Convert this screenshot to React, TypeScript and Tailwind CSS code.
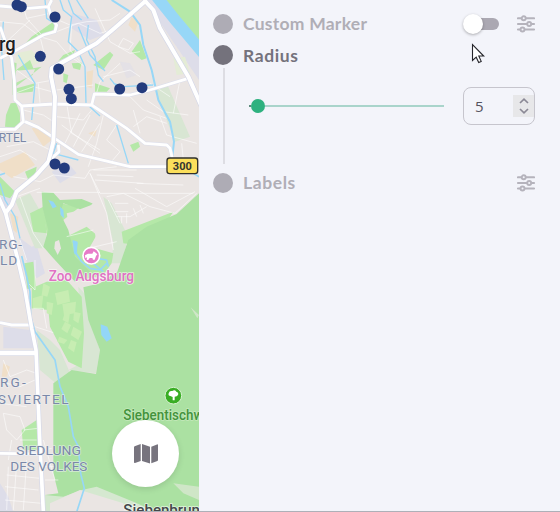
import React from "react";

const minorRoads = [
  "M0 65L70 72L120 110L135 170M65 0L80 55L130 110M80 55L150 40M20 125L90 60M120 110L170 125L205 165L255 200M170 95L235 70L300 100L350 85",
  "M175 60L210 75L260 65L330 60L360 40M215 75L210 150L240 185M285 25L305 70L330 125M330 125L390 160L420 155M370 115L400 130L385 150L355 140Z",
  "M50 210L105 250L160 240M45 280L100 260L155 275M70 330L130 345L160 365M115 250L120 310M170 270L280 255M170 350L250 360L275 330M200 310L215 400L300 450M185 375L300 460M240 340L195 430M270 345L220 440M300 370L245 455",
  "M310 345L290 430L265 500M350 375L320 420L360 455M285 295L300 245L360 190M310 230L390 210L420 230M390 290L430 330L500 355M440 300L490 335L565 345M480 350L500 405L590 430M400 330L420 400M540 240L520 340M450 250L510 290",
  "M400 380L440 350L500 370M545 430L550 480M360 455L330 490M0 470L60 450L110 480M20 440L100 425L150 450M40 530L120 545L160 525L255 535L270 510L350 500M270 520L320 640L340 750M270 520L300 580H580M285 540L430 550M290 525L400 530M280 510L410 510M410 550L550 555",
  "M320 590L370 580L450 620L525 640M325 600L360 670M345 610H385M345 635H385M350 650H390L440 620M365 670V650M380 670V640M410 650L400 625M430 640L420 615M405 565L500 620L585 575M525 640L590 580",
  "M110 577H300M50 590L120 565M60 590L100 700L130 745M60 720L80 780M85 850L105 870V780M100 925H130L140 985M105 980L160 998M265 745L350 725M200 710L280 690",
  "M10 1080L30 1130L80 1110L110 1120M20 1150L60 1160L105 1140M0 1210L80 1220M10 1240L60 1250L75 1290L50 1320L20 1290ZM70 1290L115 1285M35 1320L25 1380M60 1320L110 1320M25 1400L20 1530M50 1390L40 1530M80 1380L70 1530M20 1425L120 1435M15 1460L115 1470M15 1500L125 1510M130 1320L165 1440M135 1350L155 1345M135 1400L165 1400M135 1440H175",
];

const mainRoads = [
  "M0 18L85 25L145 20L155 0M145 20L155 55L170 75L165 95L130 105L50 150L0 175M0 80L20 135L35 175L43 240L45 300L65 318L160 312L275 315L380 385L435 430L500 435L510 445L518 480",
  "M65 318L70 365L45 388H0M75 365L115 382L235 463L390 500H510M275 315L283 282L390 285L450 270L565 235M175 435L177 455L155 475",
  "M0 968L35 975H90M0 1360L120 1362",
];

const markers = [
  [51, 15], [64, 20], [165, 51], [121, 169], [176, 207], [207, 268], [214, 296], [359, 267], [426, 263], [165, 492], [193, 504],
];

const allotments = [
  "M130 850L150 860L142 890L125 885Z", "M165 880L205 870L210 905L172 915Z", "M187 912L228 905L225 940L192 945Z", "M140 905L160 910L155 945L140 940Z", "M195 935L210 938L205 970L188 960Z", "M222 935L242 940L235 970L220 960Z",
  "M195 965L213 975L202 1000L184 987Z", "M220 980L246 995L235 1020L212 1005Z", "M178 1010L202 1020L192 1032L172 1025Z", "M213 1020L230 1027L222 1057L204 1044Z", "M98 895L130 885L125 925L98 925Z",
];

function CityMap() {
  return (
    <svg className="block h-full w-full" viewBox="0 0 597 1536" preserveAspectRatio="none" fill="none">
      <rect width="597" height="1536" fill="#eae5e3" />

      <g fill="#dddde9">
        <path d="M435 0L597 240V150L490 0Z" />
        <path d="M215 40L290 60L310 105L270 120L215 85Z" />
        <path d="M360 185L390 190L410 225L380 235Z" fillOpacity=".5" />
        <path d="M0 590H45L35 630L10 640Z" />
        <path d="M55 710L95 740L110 735L135 820L110 835L80 785Z" />
        <path d="M10 980L90 990L100 1045H10Z" />
        <path d="M0 1450L25 1490L40 1536H0Z" />
        <path d="M230 1500L290 1475L275 1536H225Z" />
        <path d="M155 515L205 490L230 520L180 550Z" />
      </g>
      <g fill="#f0dfc8">
        <path d="M0 490L75 455L105 495L35 535L0 510Z" />
        <path d="M95 385L125 380L155 420L130 440Z" />
        <path d="M260 215L280 210L275 265L260 260Z" />
        <path d="M395 50L415 65L405 95L385 75Z" />
        <path d="M30 640L55 650L50 700L40 690Z" />
        <path d="M265 400L290 390L285 410Z" />
        <path d="M10 1090L30 1100L20 1130H5Z" />
      </g>
      <g fill="#d8e6d3">
        <path d="M465 270L500 250L570 410L525 425Z" />
        <path d="M520 175L555 170L570 220L530 225Z" fill="#e4ecd6" />
        <path d="M50 160L95 150L125 185L90 200L45 190Z" fill="#e4ecd6" />
        <path d="M45 600L90 580L130 650L145 745L105 745Z" />
        <path d="M310 590L335 610L385 710L365 790L335 790L340 730Z" />
        <path d="M235 860L262 890L275 980L300 1050L288 1120L205 1110L245 1090Z" />
        <path d="M110 990L150 1020L180 1050L215 1130L180 1160L120 1110Z" />
      </g>
      <g fill="#b5e8a8">
        <path d="M495 0H597V165L540 60Z" />
        <path d="M32 310L48 308L60 340V385L15 380L18 345Z" />
        <path d="M35 185L50 190L45 250L98 225L105 208L45 212L90 180L100 205L125 200L100 220L45 262V285H38Z" />
        <path d="M50 265L105 250L98 275L50 280Z" />
        <path d="M95 110L160 65L165 88L130 105L65 142Z" />
        <path d="M190 165L225 150L220 165L175 182Z" />
        <path d="M215 190L245 188L240 210L220 205Z" />
        <path d="M280 195L330 155L340 165L310 210Z" />
        <path d="M190 220L205 225L200 250L190 245Z" />
        <path d="M395 155L420 120L440 175L425 180Z" />
        <path d="M285 250L330 265L320 275L285 275Z" />
        <path d="M390 435L415 425L420 440L400 455Z" />
        <path d="M0 530L45 575L30 595L0 585Z" />
        <path d="M75 515L110 500L105 530L85 540Z" />
        <path d="M90 640L130 620L140 700L100 695Z" />
        <path d="M73 790L100 785L108 860L82 868Z" />
        <path d="M95 865L140 845L200 840L245 890L252 1000L245 1105L205 1085L150 980L145 930L95 925Z" />
        <path d="M180 610L240 620L190 660L180 720L260 680L290 705L270 740L340 760L335 790L310 825L245 840L150 750L130 645Z" />
        <path d="M365 695L520 635L450 740L370 730Z" />
        <path d="M65 1290L110 1260L115 1350L70 1350Z" />
      </g>
      <g fill="#abe1a2">
        <path d="M597 580L530 642L440 680L385 720L352 815L300 850L250 862L265 960L300 1050L288 1122L215 1110L160 1150V1420L175 1480L135 1485V1536H597Z" />
        <path d="M125 575L160 578L180 600L245 597L282 612L240 628L190 610L180 640L205 690L225 770L275 820L225 845L160 775L130 740L145 690L128 625Z" />
      </g>
      <path d="M165 725L177 720L183 745L173 765L163 745Z" fill="#eae5e3" />
      <path d="M200 640L265 625L295 590L330 710L290 735L285 700L265 675L210 690Z" fill="#eae5e3" />
      <path d="M135 1485L190 1490L245 1470L290 1460L400 1505L470 1536H135Z" fill="#d5e8d0" />
      <path d="M150 1510L240 1470L370 1510L380 1536H150Z" fill="#eae5e3" />
      <path d="M520 1450L597 1460V1500L550 1480ZM572 922L597 945L592 955L580 935Z" fill="#cfe6c7" />
      <g fill="#c7edb2">{allotments.map((d) => <path key={d} d={d} />)}</g>

      <g stroke="#fff" strokeOpacity=".55" strokeWidth="3">{minorRoads.map((d) => <path key={d} d={d} />)}</g>

      <g stroke="#97d7f7" strokeWidth="4" strokeLinejoin="round">
        <path d="M470 -10L530 65L610 160" strokeWidth="34" />
        <path d="M335 0L390 35L420 75L430 135L455 210L475 300L510 365L522 425L515 490" strokeWidth="6" />
        <path d="M135 0L140 55L155 65M180 0L190 30L215 50L205 125L235 155L255 200L258 310L300 348M205 0L220 40L245 60M230 0L265 55M235 80L270 165L315 213M265 75L260 120L285 170L295 225L310 245M340 250L370 260L460 255M330 235L350 260M350 375L385 490M55 165L80 210L105 250L95 360M10 65L5 150L12 240M170 430L160 460L235 480M0 550L15 600L45 650L60 715" />
        <path d="M65 768L78 820L90 875L92 950L105 995L165 1080L180 1160L205 1220L220 1310L235 1340L242 1420L253 1465L230 1536" strokeWidth="5" />
        <path d="M218 725L230 730L225 755L245 785L270 805L300 810L320 790M290 775L320 780L325 800M280 790L310 815M0 525L15 520M580 520L597 530" strokeWidth="5" />
      </g>
      <g fill="#93d6f8">
        <path d="M302 973L322 980L335 1015L320 1025L304 1005Z" />
        <path d="M145 600L160 605L170 620L158 625ZM180 620L190 630L192 655L182 645ZM218 720L233 725L230 765L240 775L222 760Z" />
      </g>

      <g stroke="#dddfeb" strokeWidth="12" strokeLinejoin="round">{mainRoads.map((d) => <path key={d} d={d} />)}</g>
      <g stroke="#fff" strokeWidth="8.5" strokeLinejoin="round">{mainRoads.map((d) => <path key={d} d={d} />)}</g>
      {[
        { c: "#d5d8e8", e: 4 },
        { c: "#ffffff", e: 0 },
      ].map(({ c, e }) => (
        <g key={c} stroke={c} strokeLinejoin="round">
          <path d="M440 0L345 83L290 130L155 205L153 230L165 290L160 425L145 485L105 530L50 575L35 615L17 638" strokeWidth={12 + e} />
          <path d="M432 0L460 30L480 85L565 230L605 320" strokeWidth={12 + e} />
          <path d="M-5 590L17 640L50 765L75 870L95 985L108 1050L120 1340L130 1536" strokeWidth={11 + e} />
          <path d="M0 1059H108" strokeWidth={13 + e} />
        </g>
      ))}

      <g fill="#233b7d">{markers.map(([x, y]) => <circle key={`${x}-${y}`} cx={x} cy={y} r="16.5" />)}</g>

      <g fontFamily="Roboto, 'Liberation Sans', sans-serif" stroke="#fff" strokeOpacity=".65" strokeWidth="5" paintOrder="stroke" strokeLinejoin="round">
        <text x="-3" y="153" fontSize="60" fontWeight="500" fill="#202022" textLength="50" lengthAdjust="spacingAndGlyphs">rg</text>
        <g fill="#7a88a8" stroke="#eef0f2" fontSize="41">
          <text x="-4" y="425" textLength="83" fontSize="40" lengthAdjust="spacingAndGlyphs">RTEL</text>
          <text x="-3" y="748" textLength="69">RG-</text>
          <text x="0" y="795" textLength="52">LD</text>
          <text x="0" y="1162" textLength="77">RG-</text>
          <text x="-7" y="1211" textLength="213">SVIERTEL</text>
          <text x="49" y="1366" textLength="194" lengthAdjust="spacingAndGlyphs">SIEDLUNG</text>
          <text x="31" y="1412" textLength="231" lengthAdjust="spacingAndGlyphs">DES VOLKES</text>
        </g>
        <text x="146" y="843" fontSize="43" fontWeight="500" fill="#e071c3" textLength="256" lengthAdjust="spacingAndGlyphs">Zoo Augsburg</text>
        <text x="370" y="1261" fontSize="43" fontWeight="500" fill="#43933d" stroke="#d5edcb" textLength="240" lengthAdjust="spacingAndGlyphs">Siebentischw</text>
        <text x="370" y="1545" fontSize="43" fontWeight="500" fill="#45484b" textLength="230" lengthAdjust="spacingAndGlyphs">Siebenbrun</text>
      </g>

      <rect x="501" y="474" width="92" height="47" rx="8" fill="#fbdf5c" stroke="#31312c" strokeWidth="4" />
      <text x="547" y="509" textAnchor="middle" fill="#34342f" fontFamily="Roboto, sans-serif" fontSize="33" fontWeight="700" textLength="57">300</text>

      <circle cx="274" cy="767" r="25" fill="#e77bc8" stroke="#fff" strokeWidth="5" />
      <path d="M255 766L264 761H277L281 754L287 758L292 763L288 768L284 779H279L277 774H269L265 780H260L261 772L256 775Z" fill="#fff" />
      <circle cx="520" cy="1187" r="25" fill="#39ad24" stroke="#d8f2d0" strokeWidth="3" />
      <path d="M518 1201V1191L511 1188Q504 1188 506 1180Q508 1171 517 1173Q524 1168 529 1175Q537 1177 534 1185Q531 1190 524 1190V1201Z" fill="#fff" />
    </svg>
  );
}

function SettingsIcon() {
  return (
    <svg className="h-[18px] w-[18px] shrink-0" viewBox="0 0 18 18" fill="none" stroke="#b5b3bc" strokeWidth="1.9" strokeLinecap="round">
      <path d="M.8 3.3H4.5M9 3.3H17.2M.8 9H10M14.5 9H17.2M.8 14.5H3.3M7.8 14.5H17.2" />
      <circle cx="6.7" cy="3.3" r="2" />
      <circle cx="12.2" cy="9" r="2" />
      <circle cx="5.5" cy="14.5" r="2" />
    </svg>
  );
}

function Row({ label, active = false, children }: { label: string; active?: boolean; children?: React.ReactNode }) {
  return (
    <div className="flex h-8 items-center">
      <span className={`h-5 w-5 shrink-0 rounded-full ${active ? "-mt-0.5 bg-[#74727c]" : "bg-[#aeacb5]"}`} />
      <span className={`ml-[10px] flex-1 whitespace-nowrap text-[17.5px] leading-6 font-bold ${active ? "text-[#74727c]" : "text-[#b0aeb6]"}`}>
        <span className={label === "Custom Marker" ? "tracking-[0.25px]" : "tracking-[0.6px]"}>{label}</span>
      </span>
      {children}
    </div>
  );
}

export default function App() {
  return (
    <div className="relative flex h-[512px] w-[560px] overflow-hidden bg-[#f3f4fa] font-['Lato','Open_Sans',sans-serif]">
      <section className="relative h-full w-[199px] shrink-0 overflow-hidden">
        <CityMap />
        <button className="absolute top-[420px] left-[112px] flex h-[67px] w-[67px] items-center justify-center rounded-full bg-white shadow-[0_2px_6px_rgba(0,0,0,0.12)]">
          <svg className="h-5 w-6" viewBox="0 0 24 20" fill="#77747e">
            <path d="M0 3.2Q0 2.6.6 2.3L6.7.1V17L1 19Q0 19.2 0 18.3ZM8 .1L16 2.8V19.5L8 17ZM17.3 2.8L23 .4Q24 .1 24 1V16.1Q24 16.8 23.4 17L17.3 19.3Z" />
          </svg>
        </button>
      </section>

      <aside className="flex flex-1 flex-col pt-2 pr-[25px] pl-[14px]">
        <Row label="Custom Marker">
          <span className="mr-[18px] flex h-5 w-9 items-center">
            <span className="z-10 h-5 w-5 shrink-0 rounded-full bg-white shadow-[0_1px_3px_rgba(0,0,0,0.3)]" />
            <span className="-ml-[10px] h-3 w-[26px] rounded-full bg-[#aba8b2]" />
          </span>
          <SettingsIcon />
        </Row>
        <Row label="Radius" active />
        <div className="-mt-1 mb-[3px] flex h-24">
          <div className="ml-[10px] w-0.5 shrink-0 bg-[#dddde3]" />
          <div className="mt-[19px] ml-6 flex h-[38px] flex-1 items-center">
            <div className="flex h-[14px] w-[195px] items-center">
              <span className="h-0.5 w-0.5 bg-[#5c8c7c]" />
              <span className="h-[14px] w-[14px] shrink-0 rounded-full bg-[#2eb17f]" />
              <span className="h-0.5 flex-1 bg-[#a9d4cb]" />
            </div>
            <div className="ml-[19px] flex h-[38px] w-[72px] items-center justify-between overflow-hidden rounded-[8px] border border-[#c6c5cd] pl-[11px] text-[15px] text-[#55535e]">
              <span className="font-['Open_Sans']">5</span>
              <span className="flex h-[22px] w-[21px] items-center justify-center bg-[#e7e7e9]">
                <svg className="h-4 w-[10px]" viewBox="0 0 10 16" fill="none" stroke="#8b8996" strokeWidth="1.7">
                  <path d="M1 5L5 1.2L9 5M1 11L5 14.8L9 11" />
                </svg>
              </span>
            </div>
          </div>
        </div>
        <Row label="Labels">
          <SettingsIcon />
        </Row>
      </aside>

      <svg className="absolute top-[43px] left-[471px] h-[21px] w-[14px]" viewBox="0 0 14 21" fill="#fff" stroke="#25252b" strokeWidth="1.1">
        <path d="M1.5 1.5V17.5L5.2 14.2L7.7 19.5L10.2 18.4L7.8 13H12.7Z" />
      </svg>
      <div className="absolute bottom-0 left-0 h-px w-full bg-[#aeb0b8]" />
    </div>
  );
}
